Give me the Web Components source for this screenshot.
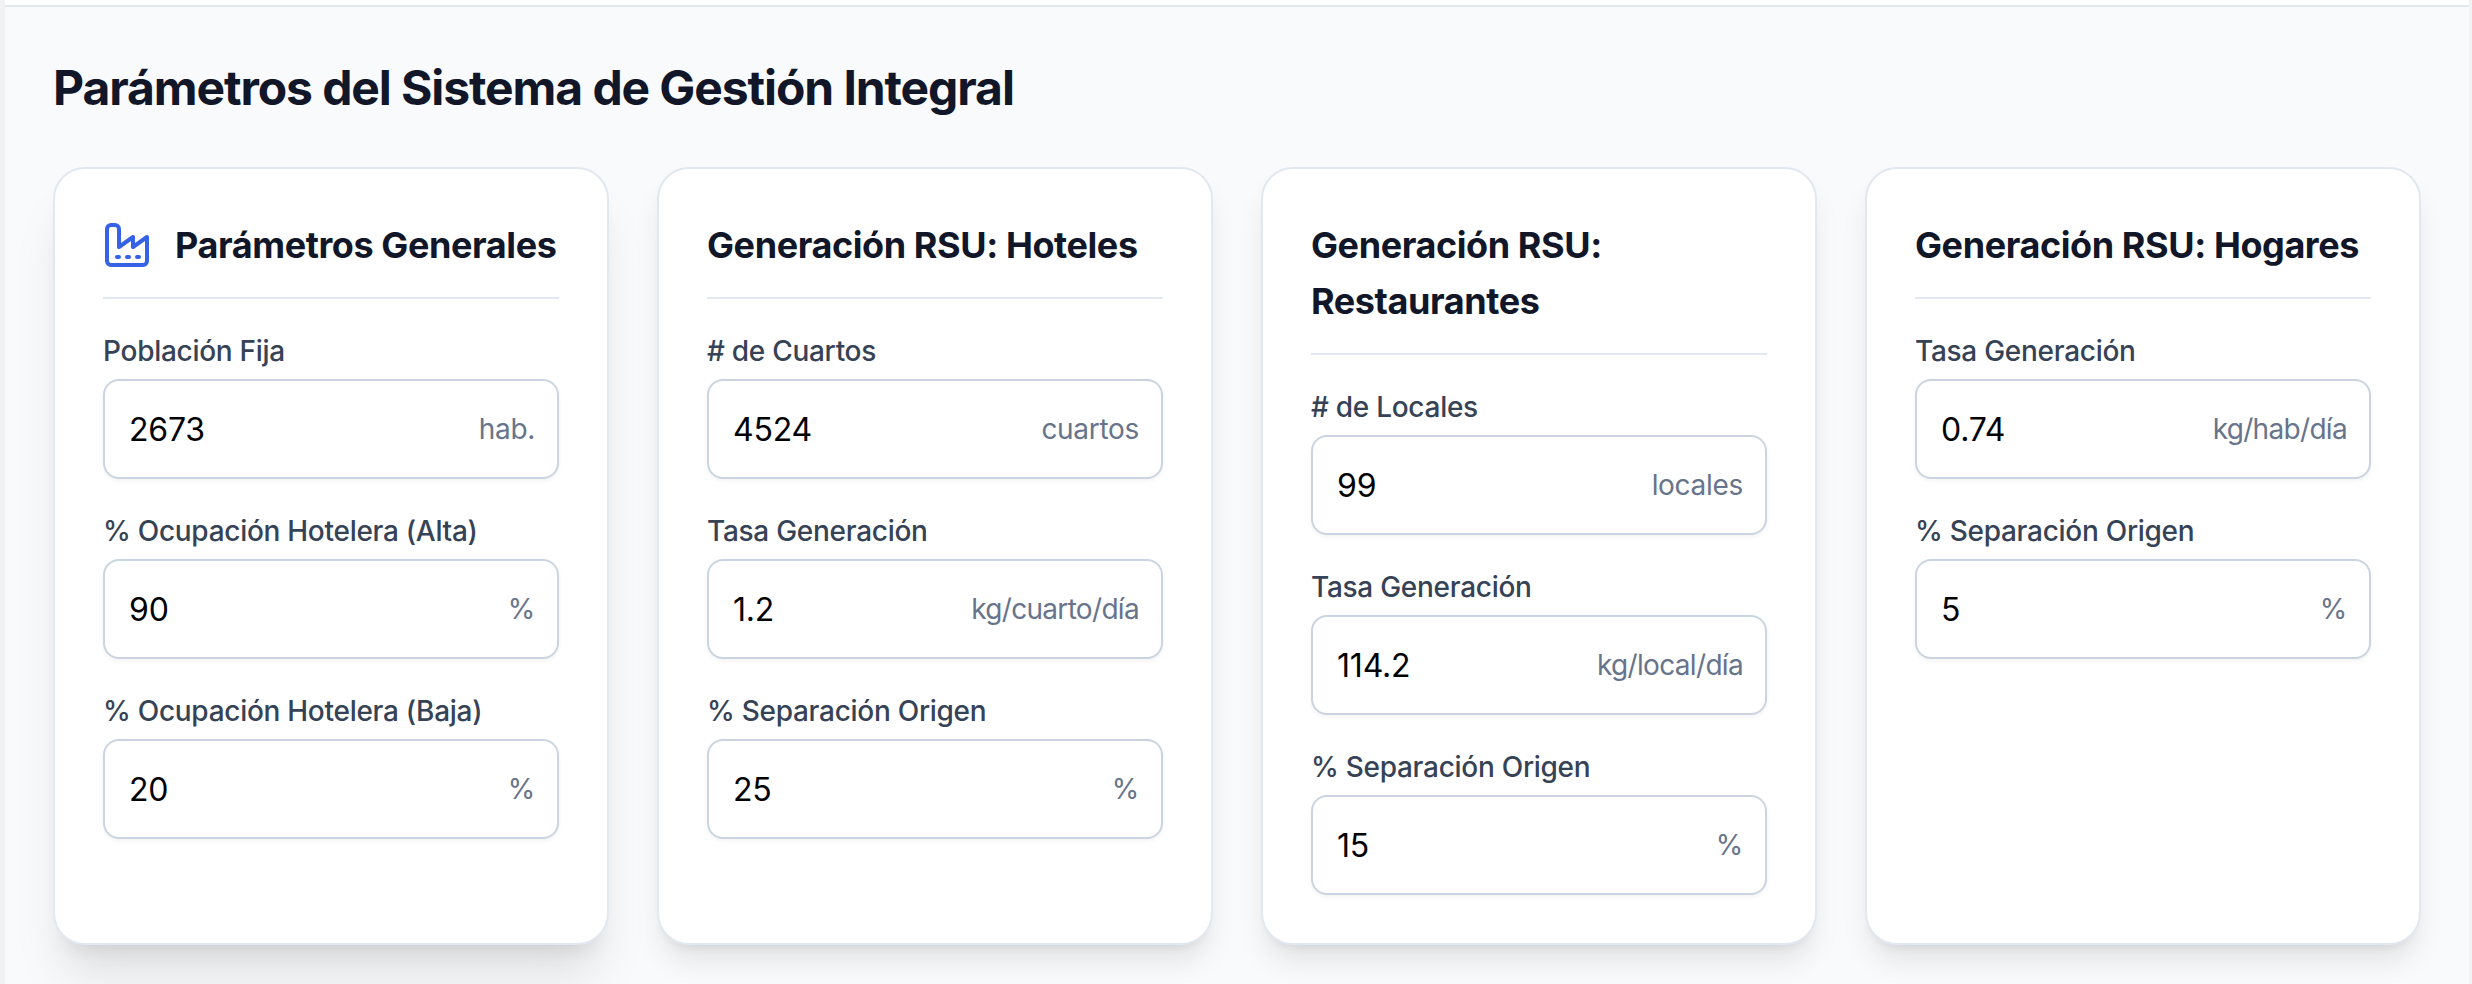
<!DOCTYPE html>
<html lang="es">
<head>
<meta charset="utf-8">
<title>Parámetros del Sistema</title>
<style>
html,body{margin:0;height:100%}
body{font-family:Inter,"Liberation Sans",sans-serif;background:#f1f2f4;overflow:hidden}
</style>
</head>
<body>
<params-panel heading="Parámetros del Sistema de Gestión Integral">
  <param-card heading="Parámetros Generales" active>
    <factory-icon slot="icon"></factory-icon>
    <param-field label="Población Fija" value="2673" unit="hab."></param-field>
    <param-field label="% Ocupación Hotelera (Alta)" value="90" unit="%"></param-field>
    <param-field label="% Ocupación Hotelera (Baja)" value="20" unit="%"></param-field>
  </param-card>
  <param-card heading="Generación RSU: Hoteles">
    <param-field label="# de Cuartos" value="4524" unit="cuartos"></param-field>
    <param-field label="Tasa Generación" value="1.2" unit="kg/cuarto/día"></param-field>
    <param-field label="% Separación Origen" value="25" unit="%"></param-field>
  </param-card>
  <param-card heading="Generación RSU: Restaurantes">
    <param-field label="# de Locales" value="99" unit="locales"></param-field>
    <param-field label="Tasa Generación" value="114.2" unit="kg/local/día"></param-field>
    <param-field label="% Separación Origen" value="15" unit="%"></param-field>
  </param-card>
  <param-card heading="Generación RSU: Hogares">
    <param-field label="Tasa Generación" value="0.74" unit="kg/hab/día"></param-field>
    <param-field label="% Separación Origen" value="5" unit="%"></param-field>
  </param-card>
</params-panel>
<script>
class BaseElement extends HTMLElement {
  connectedCallback() {
    if (this.shadowRoot) return;
    this.attachShadow({ mode: 'open' }).innerHTML = this.render();
  }
  attr(name) { return this.getAttribute(name) || ''; }
}

customElements.define('params-panel', class extends BaseElement {
  render() {
    return `<style>
      :host{display:block;box-sizing:border-box;height:100vh;padding:0 3px 0 5px;overflow:hidden}
      .bar{height:5px;background:#fff;border-bottom:2px solid #e2e8f0}
      main{box-sizing:border-box;height:calc(100% - 7px);padding:49px 48px 48px;background:#f9fafc}
      h2{margin:0 0 47px;font-size:48px;line-height:64px;font-weight:700;letter-spacing:-1.09px;color:#111629}
      .grid{display:grid;grid-template-columns:repeat(4,minmax(0,1fr));gap:48px}
    </style>
    <div class="bar"></div>
    <main><h2>${this.attr('heading')}</h2><div class="grid"><slot></slot></div></main>`;
  }
});

customElements.define('param-card', class extends BaseElement {
  render() {
    return `<style>
      :host{display:block;box-sizing:border-box;padding:48px;background:#fff;border:2px solid #e2e8f0;border-radius:32px;
        box-shadow:0 20px 30px -6px rgb(0 0 0/.1),0 8px 12px -8px rgb(0 0 0/.1)}
      :host([active]){box-shadow:0 40px 50px -10px rgb(0 0 0/.1),0 16px 20px -12px rgb(0 0 0/.1)}
      header{display:flex;align-items:center;gap:24px;padding-bottom:24px;margin-bottom:32px;border-bottom:2px solid #e2e8f0}
      h3{margin:0;font-size:36px;line-height:56px;font-weight:700;letter-spacing:-.41px;color:#111629}
      .fields{display:flex;flex-direction:column;gap:32px}
    </style>
    <header><slot name="icon"></slot><h3>${this.attr('heading')}</h3></header>
    <div class="fields"><slot></slot></div>`;
  }
});

customElements.define('param-field', class extends BaseElement {
  render() {
    const unit = this.attr('unit');
    const rate = unit.includes('/') ? ' rate' : '';
    return `<style>
      :host{display:block}
      .label{font-size:28px;line-height:40px;font-weight:500;letter-spacing:-.28px;color:#364256;margin-bottom:8px}
      .box{box-sizing:border-box;height:100px;display:flex;align-items:center;justify-content:space-between;padding:0 22px 0 24px;
        border:2px solid #cbd5e1;border-radius:16px;background:#fff;box-shadow:0 2px 4px rgb(0 0 0/.05)}
      .value{font-size:32px;line-height:48px;padding-top:2px;letter-spacing:-.2px;color:#000}
      .unit{font-size:28px;line-height:40px;letter-spacing:-.3px;color:#67748b}
      .rate{letter-spacing:-.68px}
    </style>
    <div class="label">${this.attr('label')}</div>
    <div class="box"><span class="value">${this.attr('value')}</span><span class="unit${rate}">${unit}</span></div>`;
  }
});

customElements.define('factory-icon', class extends BaseElement {
  render() {
    return `<style>:host{display:block;flex:none;width:48px;height:48px;color:#3562e6}svg{display:block}</style>
    <svg width="48" height="48" viewBox="0 0 24 24" fill="none" stroke="currentColor" stroke-width="2" stroke-linecap="round" stroke-linejoin="round">
      <path d="M2 20a2 2 0 0 0 2 2h16a2 2 0 0 0 2-2V8l-7 5V8l-7 5V4a2 2 0 0 0-2-2H4a2 2 0 0 0-2 2Z"/>
      <path d="M17 18h1"/><path d="M12 18h1"/><path d="M7 18h1"/>
    </svg>`;
  }
});
</script>
</body>
</html>
